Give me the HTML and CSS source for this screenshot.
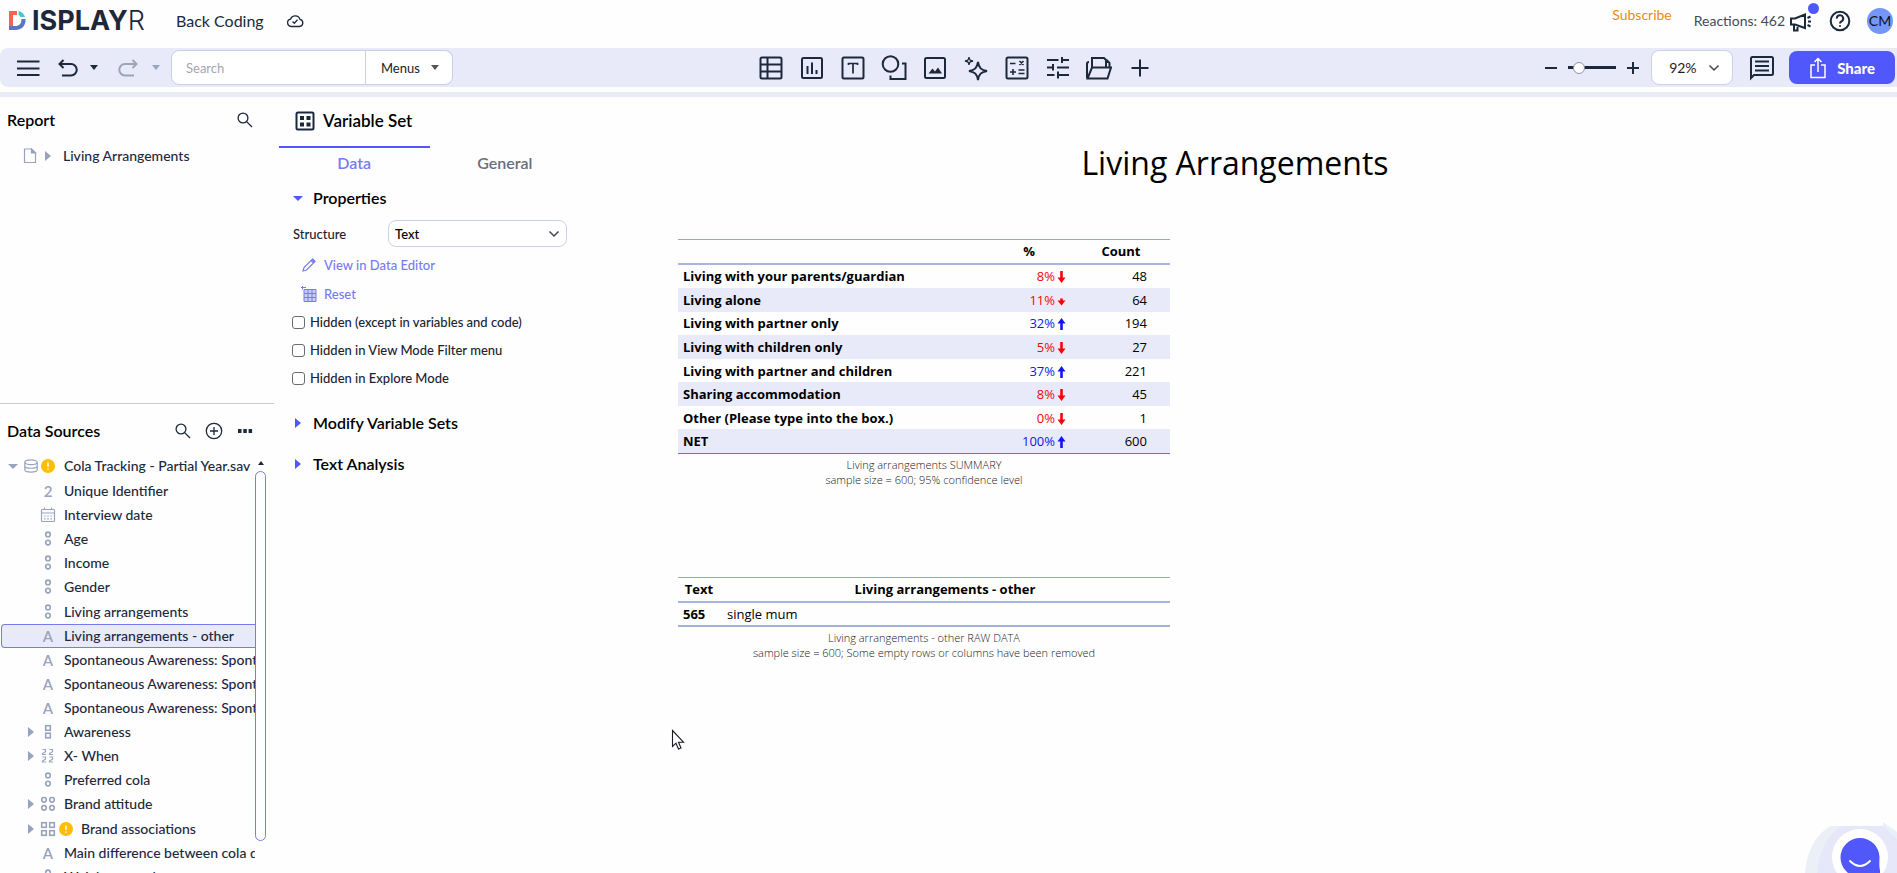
FILE: index.html
```html
<!DOCTYPE html>
<html lang="en">
<head>
<meta charset="utf-8">
<title>Back Coding - Displayr</title>
<link rel="stylesheet" href="styles.css">
</head>
<body>
<svg class="defs" aria-hidden="true">
  <defs>
    <symbol id="search" viewBox="0 0 16 16"><circle cx="6" cy="6" r="4.9"/><path d="M9.6 9.6L15 15"/></symbol>
    <symbol id="nominal" viewBox="0 0 16 16"><circle cx="8" cy="3.4" r="2.3"/><circle cx="8" cy="11.6" r="2.3"/></symbol>
    <symbol id="warn" viewBox="0 0 14 14"><circle cx="7" cy="7" r="7" fill="#fdbe00" stroke="none"/><path d="M7 3.4v4.4M7 9.6v1.2" stroke="#fff" stroke-width="1.5"/></symbol>
    <symbol id="up" viewBox="0 0 8 14"><path d="M4 1L8 6.5H5.3V13H2.7V6.5H0z"/></symbol>
    <symbol id="down" viewBox="0 0 8 14"><path d="M4 13L0 7.5H2.7V1H5.3V7.5H8z"/></symbol>
    <symbol id="down-short" viewBox="0 0 8 14"><path d="M4 11.500L0 6.500H2.700V4.500H5.300V6.500H8z"/></symbol>
  </defs>
</svg>

<header class="top">
  <a class="logo" href="#" aria-label="Displayr">
    <svg width="17" height="20" viewBox="0 0 17 20"><path d="M0 0H8V4H4V16H0z" fill="#f5624f"/><path d="M9.5 0A9 9 0 0 1 16 6H11.5A5 5 0 0 0 9.5 4z" fill="#45c8c8"/><path d="M12.5 8H16.6C16.6 15 13 19 6 19H0V15H6C10.500 15 12.500 12.500 12.500 8z" fill="#5875c8"/></svg>
    <span class="mark">ISPLAY<span class="thin">R</span></span>
  </a>
  <span class="doc">Back Coding</span>
  <svg class="ico" width="18" height="14" viewBox="0 0 18 14"><path d="M5 12.500H13.500A3.600 3.600 0 0 0 14 5.400A5 5 0 0 0 4.500 5.200A3.700 3.700 0 0 0 5 12.500z"/><path d="M6.500 7.500L8.300 9.200L11.500 5.700"/></svg>
  <div class="account">
    <a class="subscribe" href="#">Subscribe</a>
    <span class="reactions">Reactions: 462</span>
    <button class="plain bell" aria-label="Announcements"><svg class="ico thick" width="24" height="22" viewBox="0 0 24 22"><path d="M2 8.500V14.500H6L16 18V4.500L6 8.500zM5 15V20.500H8.500V15.500M18.500 8L21.500 6.500M19 11.500H22M18.500 15L21.500 16.500"/></svg><i class="dot"></i></button>
    <button class="plain help" aria-label="Help"><svg class="ico thick" width="22" height="22" viewBox="0 0 22 22"><circle cx="11" cy="11" r="9.300"/><path d="M7.800 8.600A3.200 3.200 0 1 1 12.500 11.300Q11 12.200 11 13.500M11 15.200V16.800"/></svg></button>
    <button class="avatar">CM</button>
  </div>
</header>

<nav class="toolbar" aria-label="Toolbar">
  <div class="tools-left">
    <button class="plain" aria-label="Menu"><svg class="ico thick" width="24" height="20" viewBox="0 0 24 20"><path d="M1 3.500H23.500M1 10.500H23.500M1 17H23.500"/></svg></button>
    <button class="plain undo" aria-label="Undo"><svg class="ico thick" width="20" height="20" viewBox="0 0 20 20"><path d="M5.500 2L1.500 6L5.500 10M2 6H13A5.500 5.500 0 0 1 13 17.500H4"/></svg></button>
    <button class="plain caret" aria-label="Undo history"><svg width="8" height="5" viewBox="0 0 8 5"><path d="M0 0H8L4 5z" fill="#1c283c"/></svg></button>
    <button class="plain redo" aria-label="Redo"><svg class="ico thick faded" width="20" height="20" viewBox="0 0 20 20"><path d="M14.500 2L18.500 6L14.500 10M18 6H7A5.500 5.500 0 0 0 7 17.500H16"/></svg></button>
    <button class="plain caret" aria-label="Redo history"><svg width="8" height="5" viewBox="0 0 8 5"><path d="M0 0H8L4 5z" fill="#9ba4b8"/></svg></button>
    <div class="searchbox">
      <input type="text" placeholder="Search" aria-label="Search">
      <button class="menus">Menus <svg width="8" height="5" viewBox="0 0 8 5"><path d="M0 0H8L4 5z" fill="#555"/></svg></button>
    </div>
  </div>
  <div class="tools-mid">
    <button class="plain" aria-label="Table"><svg class="ico thick" width="26" height="26" viewBox="0 0 26 26"><rect x="2.500" y="2.500" width="21" height="21" rx="1.500"/><path d="M9.500 2.500V23.500M2.500 9.500H23.500M2.500 16.500H23.500"/></svg></button>
    <button class="plain" aria-label="Chart"><svg class="ico thick" width="26" height="26" viewBox="0 0 26 26"><rect x="3" y="3" width="20" height="20" rx="1.500"/><path d="M8.500 11V19M13 7.500V19M17.500 15V19"/></svg></button>
    <button class="plain" aria-label="Text"><svg class="ico thick" width="26" height="26" viewBox="0 0 26 26"><rect x="2.500" y="2.500" width="21" height="21" rx="1.500"/><path d="M8.500 10V8.500H17.500V10M13 8.500V18.500" stroke-width="1.700"/></svg></button>
    <button class="plain" aria-label="Shape"><svg class="ico thick" width="26" height="26" viewBox="0 0 26 26"><circle cx="9.500" cy="9" r="7.800"/><path d="M21 8.500H24.500V24H9.500V20.500"/></svg></button>
    <button class="plain" aria-label="Image"><svg class="ico thick" width="26" height="26" viewBox="0 0 26 26"><rect x="3" y="3" width="20" height="20" rx="1.500"/><path d="M6.500 18.500L10.500 13.500L13 16.500L16 12.500L20 18.500z" fill="#1c283c" stroke="none"/></svg></button>
    <button class="plain" aria-label="AI tools"><svg class="ico thick" width="26" height="26" viewBox="0 0 26 26"><path d="M15 7C16 13 18 15 24 16C18 17 16 19 15 25C14 19 12 17 6 16C12 15 14 13 15 7z"/><path d="M6 2C6.500 5 7 5.500 10 6C7 6.500 6.500 7 6 10C5.500 7 5 6.500 2 6C5 5.500 5.500 5 6 2z" stroke-width="1.300"/></svg></button>
    <button class="plain" aria-label="Calculation"><svg class="ico thick" width="26" height="26" viewBox="0 0 26 26"><rect x="2.500" y="2.500" width="21" height="21" rx="1.500"/><path d="M6 8.500H11.500M15.500 6L19.500 10M19.500 6L15.500 10M6 17H12M9 14V20M14.500 15H20.500M14.500 18.500H20.500" stroke-width="1.600"/></svg></button>
    <button class="plain" aria-label="Controls"><svg class="ico thick" width="26" height="26" viewBox="0 0 26 26"><path d="M2 5H13.500M17 5H24M17 2V8M2 12.500H8M8 9V15.500M12 12.500H24M2 20H9.500M13 20H24M13 16.500V23.500"/></svg></button>
    <button class="plain" aria-label="Library"><svg class="ico thick" width="26" height="26" viewBox="1 0 26 26"><path d="M2 23V8.500Q2 7 4 7M7 13V3H19L21 5V13M2.500 23.500L7 12.500H26L22.500 23.500zM23 8V6.500L24.500 8V12"/></svg></button>
    <button class="plain" aria-label="Add"><svg class="ico thick" width="26" height="26" viewBox="0 0 26 26"><path d="M13 4.500V21.500M4.500 13H21.500"/></svg></button>
  </div>
  <div class="tools-right">
    <button class="plain" aria-label="Zoom out"><svg class="ico thick" width="14" height="14" viewBox="0 0 14 14"><path d="M1 7H13"/></svg></button>
    <input class="slider" type="range" min="0" max="100" value="14" aria-label="Zoom">
    <button class="plain" aria-label="Zoom in"><svg class="ico thick" width="14" height="14" viewBox="0 0 14 14"><path d="M7 1V13M1 7H13"/></svg></button>
    <select class="zoom" aria-label="Zoom level"><option>92%</option></select>
    <button class="plain" aria-label="Comments"><svg class="ico thick" width="26" height="26" viewBox="0 0 26 26"><path d="M2 23V3.500Q2 2 3.500 2H22.500Q24 2 24 3.500V18.500Q24 20 22.500 20H5z"/><path d="M6 6.500H20M6 11H20M6 15.500H20" stroke-width="1.800"/></svg></button>
    <button class="share"><svg width="16" height="22" viewBox="0 0 16 22"><path d="M5 8H1V20.500H15V8H11M8 15V2M4.500 5L8 1.500L11.500 5" fill="none" stroke="#fff" stroke-width="1.500"/></svg>Share</button>
  </div>
</nav>

<main class="work">
  <aside class="side">
    <section class="report">
      <div class="side-head"><h2>Report</h2><button class="plain" aria-label="Search report"><svg class="ico" width="16" height="16"><use href="#search"/></svg></button></div>
      <div class="page">
        <svg class="grey" width="14" height="16" viewBox="0 0 14 16"><path d="M1.500 1H8.500L12.500 5V14.500H1.500z"/><path d="M8.500 1V5H12.500z" fill="#98a3bd"/></svg>
        <i class="tri"></i><a href="#">Living Arrangements</a>
      </div>
    </section>
    <section class="sources">
      <div class="side-head"><h2>Data Sources</h2>
        <button class="plain" aria-label="Search data"><svg class="ico" width="16" height="16"><use href="#search"/></svg></button>
        <button class="plain" aria-label="Add data"><svg class="ico" width="18" height="18" viewBox="0 0 18 18"><circle cx="9" cy="9" r="7.700"/><path d="M9 5V13M5 9H13"/></svg></button>
        <button class="plain" aria-label="More"><svg width="16" height="6" viewBox="0 0 16 6"><path d="M1 1H4.500V5H1zM6.300 1H9.800V5H6.300zM11.600 1H15.100V5H11.600z" fill="#1c283c"/></svg></button>
      </div>
      <div class="treewrap">
        <ul class="tree">
          <li class="root"><i class="tri open"></i><svg class="grey" width="16" height="14" viewBox="0 0 16 14"><ellipse cx="8" cy="3.200" rx="6.200" ry="2.400"/><path d="M1.800 3.200V10.800C1.800 13.800 14.200 13.800 14.200 10.800V3.200M1.800 7C1.800 10 14.200 10 14.200 7"/></svg><svg width="14" height="14"><use href="#warn"/></svg><span>Cola Tracking - Partial Year.sav</span></li>
          <li><b class="glyph">2</b><span>Unique Identifier</span></li>
          <li><svg class="grey" width="16" height="16" viewBox="0 0 16 16"><rect x="1.500" y="2.500" width="13" height="12" rx="1"/><path d="M1.500 6H14.500M4.500 .5V3M11.500 .5V3"/><path d="M4 9H12M4 11.800H12" stroke-dasharray="1.600 1.600"/></svg><span>Interview date</span></li>
          <li><svg class="grey bold" width="16" height="16"><use href="#nominal"/></svg><span>Age</span></li>
          <li><svg class="grey bold" width="16" height="16"><use href="#nominal"/></svg><span>Income</span></li>
          <li><svg class="grey bold" width="16" height="16"><use href="#nominal"/></svg><span>Gender</span></li>
          <li class="roomy"><svg class="grey bold" width="16" height="16"><use href="#nominal"/></svg><span>Living arrangements</span></li>
          <li class="selected"><b class="glyph">A</b><span>Living arrangements - other</span></li>
          <li><b class="glyph">A</b><span>Spontaneous Awareness: Spontaneous</span></li>
          <li><b class="glyph">A</b><span>Spontaneous Awareness: Spontaneous</span></li>
          <li><b class="glyph">A</b><span>Spontaneous Awareness: Spontaneous</span></li>
          <li class="group"><i class="tri"></i><svg class="grey bold" width="16" height="16" viewBox="0 0 16 16"><rect x="5.700" y="1.700" width="4.600" height="4.600"/><rect x="5.700" y="9.200" width="4.600" height="4.600"/></svg><span>Awareness</span></li>
          <li class="group"><i class="tri"></i><svg class="grey" width="16" height="16" viewBox="0 0 16 16"><path d="M2.500 1.500H5.500V3.700L2.500 5.500V6.500H6M9.500 1.500H12.500V3.700L9.500 5.500V6.500H13M2.500 9H5.500V11.200L2.500 13V14H6M9.500 9H12.500V11.200L9.500 13V14H13"/></svg><span>X- When</span></li>
          <li><svg class="grey bold" width="16" height="16"><use href="#nominal"/></svg><span>Preferred cola</span></li>
          <li class="group"><i class="tri"></i><svg class="grey bold" width="16" height="16" viewBox="0 0 16 16"><circle cx="4" cy="3.800" r="2.300"/><circle cx="12" cy="3.800" r="2.300"/><circle cx="4" cy="11.800" r="2.300"/><circle cx="12" cy="11.800" r="2.300"/></svg><span>Brand attitude</span></li>
          <li class="group roomy flagged"><i class="tri"></i><svg class="grey bold" width="16" height="16" viewBox="0 0 16 16"><rect x="1.700" y="1.700" width="4.600" height="4.600"/><rect x="9.700" y="1.700" width="4.600" height="4.600"/><rect x="1.700" y="9.700" width="4.600" height="4.600"/><rect x="9.700" y="9.700" width="4.600" height="4.600"/></svg><svg width="14" height="14"><use href="#warn"/></svg><span>Brand associations</span></li>
          <li><b class="glyph">A</b><span>Main difference between cola drinks</span></li>
          <li><svg class="grey bold" width="16" height="16"><use href="#nominal"/></svg><span>Weight control</span></li>
        </ul>
        <div class="scroll"><i class="scroll-up"></i><div class="thumb"></div></div>
      </div>
    </section>
  </aside>

  <section class="inspector">
    <div class="insp-head">
      <svg class="ico thick" width="20" height="20" viewBox="0 0 20 20"><rect x="1.500" y="1.500" width="17" height="17" rx="1.500"/><path d="M5 5H9V9H5zM11.500 5H15.500V9H11.500zM5 11.500H9V15.500H5zM11.500 11.500H15.500V15.500H11.500z" fill="#1c283c" stroke="none"/></svg>
      <h2>Variable Set</h2>
    </div>
    <div class="tabs"><button class="tab on">Data</button><button class="tab">General</button></div>
    <div class="insp-body">
      <h3 class="fold"><i class="tri open blue"></i>Properties</h3>
      <div class="field"><label for="structure">Structure</label><select id="structure"><option>Text</option></select></div>
      <a class="act" href="#"><svg width="16" height="16" viewBox="0 0 16 16"><path d="M2 14L3 10.500L11.500 2L14 4.500L5.500 13zM10 3.500L12.500 6" fill="none" stroke="#767bf0" stroke-width="1.200"/><path d="M10.500 3L12 1.500L14.500 4L13 5.500z" fill="#767bf0"/></svg>View in Data Editor</a>
      <a class="act second" href="#"><svg width="16" height="16" viewBox="0 0 16 16"><path d="M3 3.500H15V15.500H3z" fill="#c9cbf8"/><path d="M3 3.500H15V15.500H3zM3 7.500H15M3 11.500H15M7 3.500V15.500M11 3.500V15.500M0 1.500H5M1.500 0V3.500" fill="none" stroke="#767bf0"/></svg>Reset</a>
      <label class="check"><input type="checkbox">Hidden (except in variables and code)</label>
      <label class="check"><input type="checkbox">Hidden in View Mode Filter menu</label>
      <label class="check"><input type="checkbox">Hidden in Explore Mode</label>
      <h3 class="fold later"><i class="tri blue"></i>Modify Variable Sets</h3>
      <h3 class="fold"><i class="tri blue"></i>Text Analysis</h3>
    </div>
  </section>

  <section class="canvas">
    <h1>Living Arrangements</h1>
    <figure>
      <table class="summary">
        <thead><tr><th class="name"></th><th>%</th><th>Count</th></tr></thead>
        <tbody>
          <tr><th>Living with your parents/guardian</th><td class="low">8%<svg><use href="#down"/></svg></td><td>48</td></tr>
          <tr><th>Living alone</th><td class="low">11%<svg><use href="#down-short"/></svg></td><td>64</td></tr>
          <tr><th>Living with partner only</th><td class="high">32%<svg><use href="#up"/></svg></td><td>194</td></tr>
          <tr><th>Living with children only</th><td class="low">5%<svg><use href="#down"/></svg></td><td>27</td></tr>
          <tr><th>Living with partner and children</th><td class="high">37%<svg><use href="#up"/></svg></td><td>221</td></tr>
          <tr><th>Sharing accommodation</th><td class="low">8%<svg><use href="#down"/></svg></td><td>45</td></tr>
          <tr><th>Other (Please type into the box.)</th><td class="low">0%<svg><use href="#down"/></svg></td><td>1</td></tr>
          <tr><th>NET</th><td class="high">100%<svg><use href="#up"/></svg></td><td>600</td></tr>
        </tbody>
      </table>
      <figcaption>Living arrangements SUMMARY<br>sample size = 600; 95% confidence level</figcaption>
    </figure>
    <figure class="second">
      <table class="raw">
        <thead><tr><th class="id">Text</th><th>Living arrangements - other</th></tr></thead>
        <tbody><tr><th>565</th><td>single mum</td></tr></tbody>
      </table>
      <figcaption>Living arrangements - other RAW DATA<br>sample size = 600; Some empty rows or columns have been removed</figcaption>
    </figure>
    <svg class="cursor" width="14" height="22" viewBox="0 0 14 22"><path d="M1.500 1.500V17.500L5 14.200L7.500 20L10 19L7.500 13.200H12.500z" fill="#fff" stroke="#1a1a28" stroke-width="1.100"/></svg>
  </section>
</main>

<button class="chat" aria-label="Open chat"><svg width="92" height="51" viewBox="0 0 92 51"><path d="M0 51C2 30 10 12 26 4H78V0L92 10V51z" fill="#ebf0f7"/><path d="M12 51C14 28 22 12 38 4H78L92 17V51z" fill="#e6e8fa"/><circle cx="55" cy="35" r="28" fill="#fff"/><path d="M55 16A19.500 19.500 0 1 0 55 55H75V48Q74 46 74.500 35A19.500 19.500 0 0 0 55 16z" fill="#5057fb"/><path d="M45 39Q55 49 65 39" fill="none" stroke="#fff" stroke-width="2" stroke-linecap="round"/></svg></button>
</body>
</html>
```
FILE: styles.css
```css
* { box-sizing: border-box; }
html, body { height: 100%; }
body {
  margin: 0;
  display: flex;
  flex-direction: column;
  overflow: hidden;
  background: #fefefe;
  color: #1c283c;
  font: 14px/20px Lato, "Liberation Sans", sans-serif;
}
button, input, select { font: inherit; color: inherit; }
a { color: inherit; text-decoration: none; }
h1, h2, h3, ul, figure { margin: 0; padding: 0; }
svg { display: block; flex: none; }
.defs { position: absolute; width: 0; height: 0; }
.plain { display: flex; padding: 0; border: 0; background: none; }
.ico { fill: none; stroke: #1c283c; stroke-width: 1.3; }
.thick { stroke-width: 2; }
.faded { stroke: #9ba4b8; }
.grey { fill: none; stroke: #98a3bd; stroke-width: 1.2; }
.bold { stroke-width: 1.6; }

.top { display: flex; align-items: center; flex: none; height: 48px; padding: 0 4px 6px 9px; }
.logo { display: flex; align-items: center; gap: 6px; width: 167px; }
.mark { font: 700 27px/32px Inter, sans-serif; }
.thin { font-weight: 300; }
.doc { margin-right: 22px; font-size: 16px; }
.account { display: flex; align-items: center; margin-left: auto; }
.subscribe { margin-right: 22px; padding-bottom: 12px; color: #f0890a; }
.reactions { margin-right: 4px; color: #444b58; }
.bell { position: relative; }
.dot { position: absolute; right: -6px; top: -7px; width: 11px; height: 11px; border-radius: 50%; background: #5057fb; }
.help { margin: 0 16px; }
.avatar { width: 26px; height: 26px; padding: 0; border: 0; border-radius: 50%; background: #7397f8; color: #111; }

.toolbar { display: grid; grid-template-columns: 1fr auto 1fr; align-items: center; flex: none; height: 39px; padding: 0 2px 0 16px; border-radius: 8px 0 0 8px; background: #e8eaf9; }
.tools-left, .tools-mid, .tools-right { display: flex; align-items: center; }
.tools-mid { gap: 15px; }
.tools-right { justify-content: flex-end; }
.undo { margin: 0 12px 0 18px; }
.redo { margin: 0 14px 0 20px; }
.searchbox { display: flex; height: 35px; margin-left: 11px; }
.searchbox input { width: 195px; padding: 0 14px; border: 1px solid #c9cfe6; border-radius: 8px 0 0 8px; background: #fff; font-size: 13px; }
.searchbox input::placeholder { color: #a3a7b0; opacity: 1; }
.menus { display: flex; align-items: center; justify-content: space-between; width: 87px; padding: 0 13px 0 15px; border: 1px solid #c9cfe6; border-left-width: 0; border-radius: 0 8px 8px 0; background: #fff; color: #222; font-size: 13px; }
.slider { appearance: none; width: 48px; height: 12px; margin: 0 10px; background: linear-gradient(#1c283c, #1c283c) center / 100% 3px no-repeat; }
.slider::-webkit-slider-thumb { appearance: none; width: 12px; height: 12px; border: 1px solid #8b93a3; border-radius: 50%; background: #fff; }
select { appearance: none; border: 1px solid #cdd1e8; background: #fff url("data:image/svg+xml,%3Csvg xmlns='http://www.w3.org/2000/svg' width='12' height='8'%3E%3Cpath d='M1.500 1.500L6 6L10.500 1.500' fill='none' stroke='%23445' stroke-width='1.500'/%3E%3C/svg%3E") right 12px center no-repeat; }
.zoom { width: 82px; height: 35px; margin: 0 16px 0 11px; padding: 0 17px; border-radius: 8px; color: #1c1c28; }
.share { display: flex; align-items: center; gap: 11px; height: 33px; margin-left: 14px; padding: 0 20px 0 21px; border: 0; border-radius: 8px; background: #5057fb; color: #fff; font-size: 15px; font-weight: 900; }

.work { display: grid; grid-template-columns: 274px 306px 1fr; flex: 1; min-height: 0; margin-top: 5px; border-top: 5px solid #e9ecf6; }
.side { display: flex; flex-direction: column; min-height: 0; }
.report { height: 307px; border-bottom: 1px solid #cacacf; }
h2 { color: #000; font-size: 16px; line-height: 20px; font-weight: 600; }
.side-head { display: flex; align-items: center; gap: 14px; height: 45px; padding: 0 21px 0 7px; }
.side-head h2 { margin-right: auto; }
.page { display: flex; align-items: center; height: 22px; margin-top: 3px; padding-left: 23px; font-weight: 500; }
.page .tri { margin: 0 12px 0 8px; }
.tri { flex: none; width: 0; height: 0; border: solid transparent; border-width: 5px 0 5px 6px; border-left-color: #98a3bd; }
.tri.open { border-width: 5px 5px 0; border-color: #98a3bd transparent transparent; }
.tri.blue { border-left-color: #5057fb; }
.tri.open.blue { border-color: #5057fb transparent transparent; }
.sources { display: flex; flex-direction: column; flex: 1; min-height: 0; }
.sources .side-head { flex: none; height: 49px; padding-top: 5px; }
.treewrap { display: flex; flex: 1; min-height: 0; padding-left: 1px; }
.tree { width: 254px; flex: none; overflow: hidden; list-style: none; font-weight: 500; }
.tree li { display: flex; align-items: center; gap: 8px; height: 24px; padding-left: 39px; white-space: nowrap; }
.tree span { flex: none; }
.tree .root { gap: 2px; height: 26px; padding-left: 7px; }
.tree .root span { margin-left: 7px; }
.tree .root .tri { margin-right: 3px; }
.tree .roomy { height: 25px; }
.tree .group { padding-left: 27px; gap: 6px; }
.tree .group span { margin-left: 2px; }
.tree .flagged { gap: 3px; }
.tree .flagged .tri { margin-right: 3px; }
.tree .flagged span { margin-left: 5px; }
.tree .selected { padding-left: 38px; border: 1px solid #777bee; border-right: 0; border-radius: 4px 0 0 4px; background: #e8eaf9; }
.glyph { flex: none; width: 16px; color: #98a3bd; font-size: 15px; font-weight: 600; text-align: center; }
.scroll { display: flex; flex-direction: column; align-items: center; gap: 6px; width: 11px; padding-top: 8px; }
.scroll-up { border: solid transparent; border-width: 0 3px 4px; border-bottom-color: #1c283c; }
.thumb { width: 11px; flex: none; height: calc(100% - 42px); border: 1px solid #777bee; border-radius: 6px; }

.inspector { padding-left: 5px; }
.insp-head { display: flex; align-items: center; gap: 8px; height: 49px; padding: 0 0 2px 16px; }
.insp-head h2 { font-size: 17px; }
.tabs { display: flex; }
.tab { flex: 1; padding: 5px 0; border: 0; border-top: 2px solid transparent; background: none; color: #6a6d7c; font-size: 16px; font-weight: 600; }
.tab.on { border-color: #5057fb; color: #767bf0; }
.insp-body { padding: 8px 13px 8px 14px; }
.fold { display: flex; align-items: center; gap: 10px; height: 24px; margin-bottom: 17px; color: #000; font-size: 16px; font-weight: 600; }
.fold .tri { margin: 0 2px; }
.fold .tri.open { margin: 0; }
.fold.later { margin-top: 19px; }
.fold:first-child { margin-bottom: 10px; }
.field { display: flex; align-items: center; justify-content: space-between; height: 27px; color: #20232e; font-size: 13px; font-weight: 500; }
.field select { width: 179px; height: 27px; padding: 0 6px; border-radius: 8px; background-position: right 6px center; color: #000; }
.act { display: flex; align-items: center; gap: 7px; height: 30px; margin-top: 3px; padding-left: 8px; color: #767bf0; font-size: 13px; font-weight: 500; }
.act.second { height: 28px; margin-top: 0; }
.check { display: flex; align-items: center; gap: 5px; height: 28px; color: #20232e; font-size: 13px; font-weight: 500; }
.check input { appearance: none; width: 13px; height: 13px; margin: 0 0 0 -1px; border: 1px solid #6b6b74; border-radius: 3px; background: #fff; }

.canvas { position: relative; padding: 42px 7px 0 0; color: #000; font-family: "Open Sans", sans-serif; }
h1 { margin-bottom: 52px; font-size: 32px; line-height: 48px; font-weight: 400; text-align: center; }
figure { width: 492px; margin-left: 98px; }
figure.second { margin-top: 90px; }
table { width: 100%; border-collapse: collapse; table-layout: fixed; border-top: 1px solid #93a4dc; font-size: 13px; line-height: 20px; }
th, td { padding: 0; }
thead tr { height: 24px; border-bottom: 2px solid #a9b3e0; }
tbody th { padding-left: 5px; text-align: left; white-space: nowrap; }
.summary { height: 215px; border-bottom: 1px solid #5c78cc; }
.summary .name { width: 308px; }
.summary thead th { padding-right: 6px; }
.summary tbody tr:nth-child(even) { background: #e8eaf9; }
.summary td { padding-right: 23px; text-align: right; }
.summary td.low, .summary td.high { padding-right: 12px; }
.summary td svg { display: inline-block; width: 9px; height: 14px; margin-left: 2px; vertical-align: -3px; fill: currentColor; }
.low { color: #f50505; }
.high { color: #1414f5; }
.raw { border-bottom: 2px solid #a3b0e0; }
.raw .id { width: 42px; }
.raw td { padding-left: 7px; }
.raw tbody tr { height: 24px; }
figcaption { padding-top: 3px; color: #222; font-size: 11px; line-height: 15px; font-weight: 300; text-align: center; }
.cursor { position: absolute; left: 91px; top: 632px; }
.chat { position: fixed; right: 0; bottom: 0; padding: 0; border: 0; background: none; }
```
